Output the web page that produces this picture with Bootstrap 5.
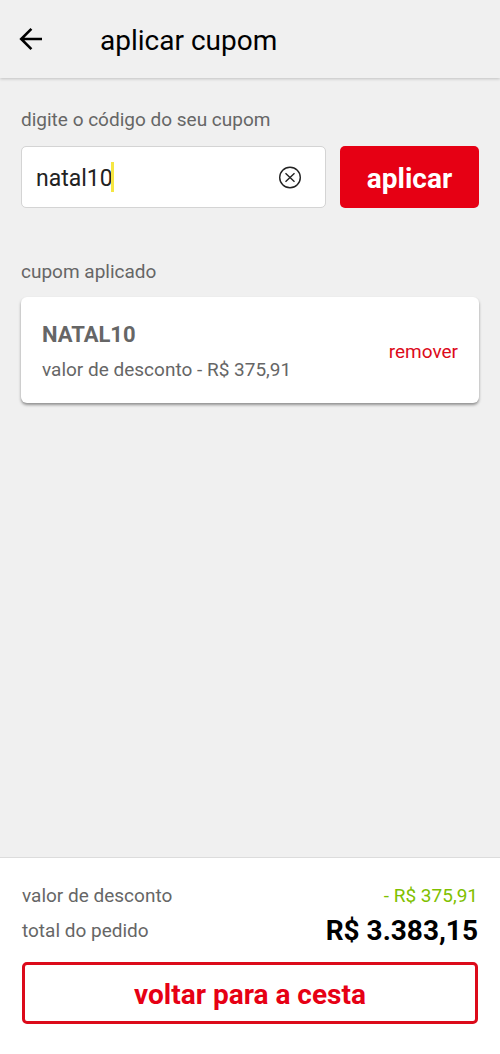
<!DOCTYPE html>
<html lang="pt-BR">
<head>
<meta charset="utf-8">
<meta name="viewport" content="width=device-width, initial-scale=1">
<title>aplicar cupom</title>
<link href="https://cdn.jsdelivr.net/npm/bootstrap@5.3.0/dist/css/bootstrap.min.css" rel="stylesheet">
<style>
  :root { --brand: #e60014; --ink-soft: #666; }
  body { font-family: Roboto, "Liberation Sans", sans-serif; font-size: 19px; line-height: 24px; background: #f0f0f0; color: var(--ink-soft); }
  .topbar { height: 78px; padding: 2px 16px 0; box-shadow: 0 1px 3px rgba(0,0,0,.2); color: #000; }
  .topbar h1 { font-size: 28px; line-height: 36px; font-weight: 400; margin: 2px 0 0 56px; }
  .back-btn { line-height: 0; }
  .content-area { padding: 30px 21px; }
  .field-label { margin-bottom: 14px; }
  .field-row { gap: 14px; }
  .tall { height: 62px; border-radius: 5px; }
  .coupon-input { font-size: 23px; padding: 2px 64px 0 14px; border: 1px solid #d4d4d4; color: #222; }
  .coupon-input:focus { border-color: #d4d4d4; color: #222; box-shadow: none; }
  .text-caret { left: 90px; top: 16px; width: 3px; height: 30px; background: #f5e642; pointer-events: none; }
  .clear-btn { right: 24px; line-height: 0; color: #222; }
  .action { font-size: 28px; font-weight: 700; line-height: 32px; padding: 3px 0 0; }
  .apply-btn, .apply-btn:hover { width: 139px; background: var(--brand); color: #fff; border: 0; }
  .outline-btn, .outline-btn:hover { background: #fff; color: var(--brand); border: 3px solid #dc0a1a; margin-top: 13px; }
  .section-gap { margin-top: 52px; }
  .section-title { font-size: 19px; line-height: 24px; font-weight: 400; margin-bottom: 13px; }
  .coupon-card { padding: 20px 21px 16px; border: 0; border-radius: 6px; box-shadow: 0 2px 3px rgba(0,0,0,.4); color: var(--ink-soft); }
  .coupon-code { font-size: 22px; line-height: 36px; font-weight: 700; }
  .coupon-value { line-height: 34px; }
  .remove-btn, .remove-btn:hover { font-size: 19px; color: #dc0a1a; }
  .summary { padding: 26px 22px 30px; border-top: 1px solid #dcdcdc; }
  .summary-row { margin-bottom: 5px; }
  .discount { color: #80c000; }
  .total { font-size: 28px; line-height: 36px; font-weight: 700; color: #000; }
</style>
</head>
<body class="d-flex flex-column min-vh-100">
  <header class="topbar d-flex align-items-center">
    <button type="button" class="back-btn btn p-0 border-0" aria-label="voltar">
      <svg width="28" height="28" viewBox="0 0 28 28" fill="none" stroke="#000" stroke-width="2.6"><path d="M26 13H5.500M15.400 2.800L5.200 13L15.400 23.200"/></svg>
    </button>
    <h1>aplicar cupom</h1>
  </header>

  <main class="content-area flex-grow-1">
    <form onsubmit="return false">
      <label for="coupon" class="field-label d-block">digite o código do seu cupom</label>
      <div class="field-row d-flex">
        <div class="position-relative flex-grow-1">
          <input id="coupon" type="text" class="coupon-input form-control tall" value="natal10">
          <span class="text-caret position-absolute"></span>
          <button type="button" class="clear-btn btn p-0 border-0 position-absolute top-50 translate-middle-y" aria-label="limpar">
            <svg width="24" height="24" viewBox="0 0 24 24" fill="none" stroke="currentColor" stroke-width="1.400"><circle cx="12" cy="12.500" r="10.300"/><path d="M7.500 8.300L16.500 16.700M16.500 8.300L7.500 16.700"/></svg>
          </button>
        </div>
        <button type="submit" class="apply-btn action btn tall flex-shrink-0">aplicar</button>
      </div>
    </form>

    <section class="section-gap">
      <h2 class="section-title">cupom aplicado</h2>
      <div class="coupon-card card flex-row align-items-center justify-content-between">
        <div>
          <div class="coupon-code">NATAL10</div>
          <div class="coupon-value">valor de desconto - R$ 375,91</div>
        </div>
        <button type="button" class="remove-btn btn p-0 border-0">remover</button>
      </div>
    </section>
  </main>

  <footer class="summary bg-white">
    <div class="summary-row d-flex justify-content-between"><span>valor de desconto</span><span class="discount">- R$ 375,91</span></div>
    <div class="d-flex justify-content-between align-items-center"><span>total do pedido</span><span class="total">R$ 3.383,15</span></div>
    <button type="button" class="outline-btn action btn tall w-100">voltar para a cesta</button>
  </footer>
<script src="https://cdn.jsdelivr.net/npm/bootstrap@5.3.0/dist/js/bootstrap.bundle.min.js"></script>
</body>
</html>
